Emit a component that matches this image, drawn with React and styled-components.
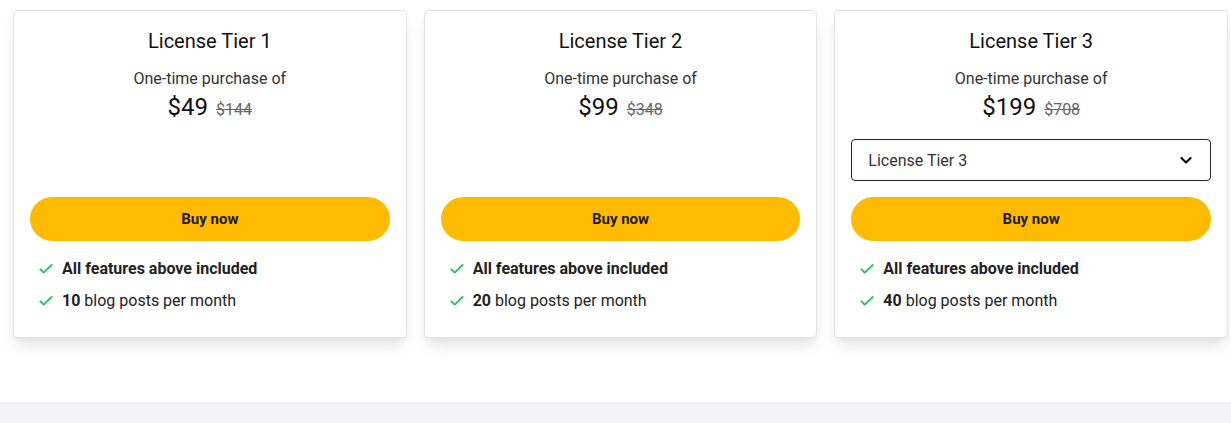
import React from 'react';
import styled, { createGlobalStyle } from 'styled-components';

const GlobalStyle = createGlobalStyle`
  * { box-sizing: border-box; }
  body {
    margin: 0;
    background: #fff;
    font-family: Roboto, 'Liberation Sans', Arial, sans-serif;
    color: #1a1a1a;
  }
`;

const Page = styled.div`
  min-height: 423px;
  display: flex;
  flex-direction: column;
`;

const Grid = styled.section`
  display: grid;
  grid-template-columns: repeat(3, 1fr);
  gap: 17px;
  width: 1215px;
  margin: 10px 0 0 13px;
`;

const Card = styled.div`
  background: #fff;
  border: 1px solid #e4e4e7;
  border-radius: 4px;
  padding: 16px 16px 24px;
  box-shadow: 0 10px 15px -3px rgba(0, 0, 0, 0.1),
    0 4px 6px -2px rgba(0, 0, 0, 0.05);
  display: flex;
  flex-direction: column;
`;

const Title = styled.h3`
  margin: 0;
  font-size: 20px;
  line-height: 28px;
  font-weight: 400;
  color: #111;
  text-align: center;
`;

const Subtitle = styled.p`
  margin: 13px 0 0;
  font-size: 16px;
  line-height: 22px;
  color: #333;
  text-align: center;
`;

const PriceRow = styled.div`
  display: flex;
  justify-content: center;
  align-items: baseline;
  gap: 8px;
  margin-top: 1px;
  line-height: 32px;
`;

const Price = styled.span`
  font-size: 24px;
  color: #111;
`;

const OldPrice = styled.s`
  font-size: 16px;
  color: #666;
`;

const Slot = styled.div`
  height: 42px;
  margin-top: 13px;
`;

const Select = styled.div`
  height: 42px;
  border: 1px solid #222;
  border-radius: 4px;
  display: flex;
  align-items: center;
  justify-content: space-between;
  padding: 0 14px 0 16px;
  font-size: 16px;
  color: #333;
`;

const BuyButton = styled.button`
  margin-top: 16px;
  height: 44px;
  border: none;
  border-radius: 22px;
  background: #ffbb00;
  font-family: inherit;
  font-size: 15px;
  font-weight: 700;
  color: #1a1a1a;
  cursor: pointer;
`;

const Features = styled.ul`
  list-style: none;
  margin: 16px 0 0;
  padding: 0 0 0 8px;
  display: flex;
  flex-direction: column;
  gap: 8px;
`;

const Feature = styled.li`
  display: flex;
  align-items: center;
  gap: 8px;
  font-size: 16px;
  line-height: 24px;
  color: #222;

  b { font-weight: 700; }
`;

const Band = styled.div`
  margin-top: auto;
  height: 21px;
  background: #f4f4f6;
`;

const Check = () => (
  <svg width="16" height="16" viewBox="0 0 24 24" fill="none" stroke="#22c55e" strokeWidth="2.8" strokeLinecap="round" strokeLinejoin="round">
    <path d="M3.5 12.5l5 5L20.5 6" />
  </svg>
);

const Chevron = () => (
  <svg width="20" height="20" viewBox="0 0 24 24" fill="none" stroke="#111" strokeWidth="2.6" strokeLinecap="round" strokeLinejoin="round">
    <path d="M6.5 9.5l5.5 5.5 5.5-5.5" />
  </svg>
);

const tiers = [
  { name: 'License Tier 1', price: '$49', old: '$144', posts: 10 },
  { name: 'License Tier 2', price: '$99', old: '$348', posts: 20 },
  { name: 'License Tier 3', price: '$199', old: '$708', posts: 40, select: true }
];

const App = () => (
  <>
    <GlobalStyle />
    <Page>
      <Grid>
        {tiers.map(t => (
          <Card key={t.name}>
            <Title>{t.name}</Title>
            <Subtitle>One-time purchase of</Subtitle>
            <PriceRow>
              <Price>{t.price}</Price>
              <OldPrice>{t.old}</OldPrice>
            </PriceRow>
            <Slot>
              {t.select && (
                <Select>
                  <span>License Tier 3</span>
                  <Chevron />
                </Select>
              )}
            </Slot>
            <BuyButton>Buy now</BuyButton>
            <Features>
              <Feature>
                <Check />
                <b>All features above included</b>
              </Feature>
              <Feature>
                <Check />
                <span>
                  <b>{t.posts}</b> blog posts per month
                </span>
              </Feature>
            </Features>
          </Card>
        ))}
      </Grid>
      <Band />
    </Page>
  </>
);

export default App;
